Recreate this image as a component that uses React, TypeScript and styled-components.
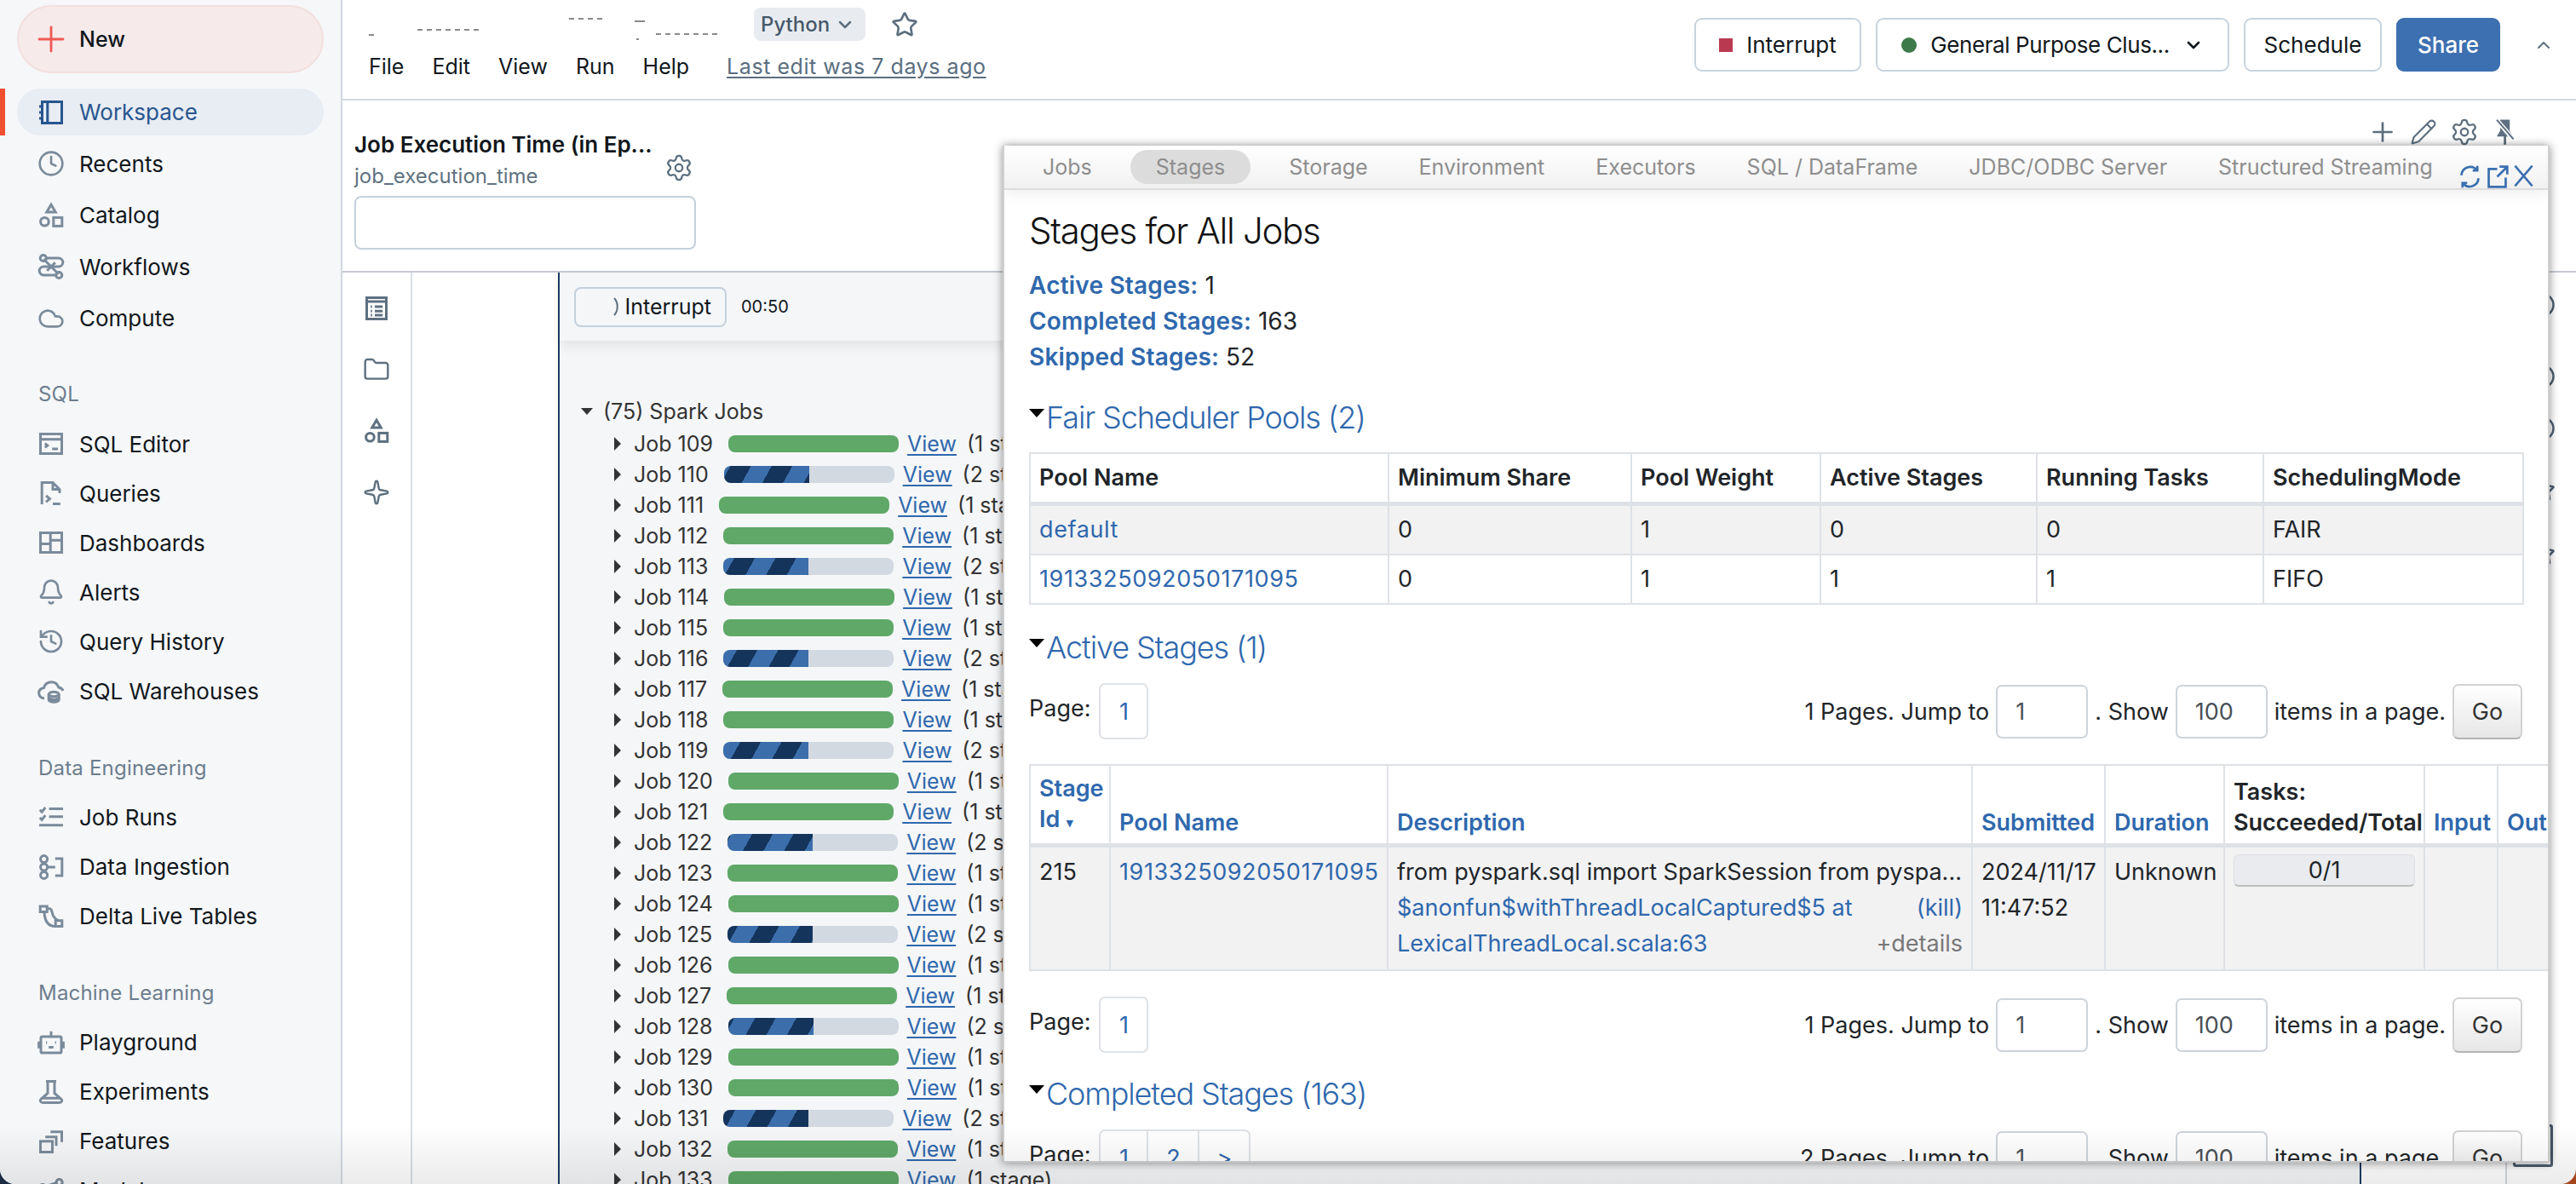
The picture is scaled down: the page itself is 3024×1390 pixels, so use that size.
import React from 'react';
import styled, { createGlobalStyle } from 'styled-components';
import {
  Bell,
  ChevronDown,
  ChevronUp,
  Circle,
  Clock,
  Cloud,
  Folder,
  History,
  Pencil,
  Plus,
  Settings,
  Sparkle,
  Star,
} from 'lucide-react';

const GlobalStyle = createGlobalStyle`
  html, body {
    margin: 0;
    padding: 0;
    background: #fff;
    font-family: 'Inter', 'Liberation Sans', sans-serif;
  }
  * { box-sizing: border-box; }
`;

const Desk = styled.div`
  width: 3024px;
  height: 1390px;
  background: linear-gradient(90deg, #1b2c44 50%, #a8451d 50%);
  overflow: hidden;
`;

const Frame = styled.div`
  position: relative;
  width: 100%;
  height: 100%;
  display: flex;
  background: #fff;
  border-radius: 0 0 18px 18px;
  overflow: hidden;
  color: #11171c;
`;

/* sidebar */
const Sidebar = styled.aside`
  width: 402px;
  flex: none;
  height: 100%;
  padding: 6px 20px 0;
  background: #f6f7f9;
  border-right: 2px solid #d1d9e1;
  position: relative;
`;

const NewButton = styled.div`
  height: 80px;
  margin-bottom: 18px;
  padding-left: 14px;
  display: flex;
  align-items: center;
  gap: 9px;
  border: 2px solid #f3dfdf;
  border-radius: 40px;
  background: #f6eaea;
  font-size: 25px;
  font-weight: 500;
`;

const NavGroup = styled.div<{ $gap: number }>`
  display: flex;
  flex-direction: column;
  gap: ${(p) => p.$gap}px;
`;

const NavItem = styled.div<{ $active?: boolean }>`
  height: 55px;
  flex: none;
  padding-left: 24px;
  display: flex;
  align-items: center;
  gap: 17px;
  border-radius: 28px;
  font-size: 26px;
  background: ${(p) => (p.$active ? '#e8ecf3' : 'transparent')};
  color: ${(p) => (p.$active ? '#27568f' : '#11171c')};
  svg {
    flex: none;
    color: ${(p) => (p.$active ? '#27568f' : '#7a8b9b')};
  }
`;

const ActiveMark = styled.div`
  position: absolute;
  left: 0;
  top: 104px;
  width: 6px;
  height: 55px;
  background: #f0502f;
`;

const SectionLabel = styled.div<{ $top: number }>`
  height: 30px;
  line-height: 30px;
  margin: ${(p) => p.$top}px 0 15.5px 25px;
  font-size: 24px;
  letter-spacing: 0.2px;
  color: #6c7d8e;
`;

/* shared svg for the product icons that no package has */
const Glyph = styled.svg<{ $size?: number }>`
  width: ${(p) => p.$size ?? 32}px;
  height: ${(p) => p.$size ?? 32}px;
  fill: none;
  stroke: currentColor;
  stroke-width: 1.5;
`;

const icons: Record<string, React.ReactNode> = {
  workspace: (
    <>
      <rect x="2.75" y="1.75" width="11.5" height="12.5" />
      <path d="M5.9 1.75v12.5M1 4.5h2.4M1 8h2.4M1 11.5h2.4" />
    </>
  ),
  catalog: (
    <>
      <path d="M8 1.6 10.6 6H5.4z" />
      <circle cx="4.2" cy="11.6" r="2.4" />
      <rect x="9.4" y="9.2" width="5" height="5" />
    </>
  ),
  workflows: (
    <>
      <circle cx="3.4" cy="3" r="1.8" />
      <circle cx="12.6" cy="13" r="1.8" />
      <path d="M5.2 3h7.2a2.5 2.5 0 0 1 0 5 H3.6a2.5 2.5 0 0 0 0 5h7.2" />
      <path d="M3.6 3.6 8 8l-2.4 2.4M12.4 12.4 8 8l2.4-2.4" />
    </>
  ),
  sqlEditor: (
    <>
      <rect x="1.75" y="2.25" width="12.5" height="11.5" />
      <path d="M1.75 5.4h12.5M4.4 7.8l1.5 1.2-1.5 1.2M8.6 11h3.4" />
    </>
  ),
  queries: (
    <>
      <path d="M2.6 14.5V1.75H9l4 4V8M9 1.75v4h4" />
      <path d="M5 9.4l2.2 1.9L5 13.2M9 14.2h4.4" />
    </>
  ),
  dashboards: (
    <>
      <rect x="1.75" y="2.25" width="12.5" height="11.5" />
      <path d="M7.6 2.25v11.5M1.75 8.8h5.85M7.6 6.6h6.65" />
    </>
  ),
  warehouse: (
    <>
      <path d="M4 12.4a3.1 3.1 0 0 1-.2-6.2 4.5 4.5 0 0 1 8.6-.2c1.2.2 2.2 1 2.6 2" />
      <ellipse cx="9.6" cy="10" rx="3" ry="1.4" />
      <path d="M6.6 10v3.2c0 .8 1.4 1.4 3 1.4s3-.6 3-1.4V10M6.6 11.8c0 .8 1.4 1.3 3 1.3s3-.5 3-1.3" />
    </>
  ),
  jobRuns: (
    <>
      <path d="M1.4 3.4l1.2 1.2 2-2.6M1.4 8l1.2 1.2 2-2.6M6.8 2.8H15M6.8 7.4H15M1 12.4h14" />
    </>
  ),
  ingestion: (
    <>
      <circle cx="3.8" cy="3.3" r="2" />
      <circle cx="3.8" cy="8" r="2" />
      <circle cx="3.8" cy="12.7" r="2" />
      <path d="M6 8h4.4M10.4 3H14.4V13H10.4" />
    </>
  ),
  delta: (
    <>
      <path d="M1.6 2h4v3.2h-4zM10.6 10.4h3.8v3.4h-3.8z" />
      <path d="M4 5.2c.2 6 2.4 8.6 6.6 8.6M8 3.4c1 4 1.6 6 4.4 7" />
      <path d="M5.6 3.4H8" />
    </>
  ),
  playground: (
    <>
      <rect x="2" y="4.5" width="12" height="9.5" rx="0.8" />
      <path d="M8 1.4v3M.8 7.4v4M15.2 7.4v4M6.6 10.8h2.8M5 8h.6M10.4 8h.6" />
    </>
  ),
  experiments: (
    <>
      <path d="M5 1.75h6M6 1.75v7L2.2 12c-1 1-.5 2.25 1 2.25h9.6c1.5 0 2-1.25 1-2.25L10 8.75v-7M3 11.6h10" />
    </>
  ),
  features: (
    <>
      <rect x="1.75" y="7.9" width="7" height="6.35" />
      <path d="M4.6 5.4H11v5.2M7.6 2.4h6.65v6" />
    </>
  ),
  models: (
    <>
      <circle cx="3" cy="6" r="1.8" />
      <circle cx="12.8" cy="3" r="1.8" />
      <circle cx="8" cy="10" r="1.8" />
      <path d="M4.6 5.4 11 3.4M4.2 7.2 6.7 9M9.2 8.8l2.8-4.4" />
    </>
  ),
  notebook: (
    <>
      <rect x="2.25" y="1.75" width="11.5" height="12.5" />
      <path d="M2.25 4h11.5M4.6 7h.8M7 7h4.6M4.6 9.6h.8M7 9.6h4.6M4.6 12h.8M7 12h4.6" />
    </>
  ),
  refresh: (
    <>
      <path d="M2.5 7a5.6 5.6 0 0 1 10-3.2M13.5 9a5.6 5.6 0 0 1-10 3.2M12.8 1v3h-3M3.2 15v-3h3" />
    </>
  ),
  popout: (
    <>
      <path d="M8 3H2.5v11.5h11V8.5M9.5 1.5h5v5M14.5 1.5 8 8" />
    </>
  ),
  close: (
    <>
      <path d="M2 1 14 15M14 1 2 15" />
    </>
  ),
};

const Icon = ({ name, size }: { name: string; size?: number }) => (
  <Glyph viewBox="0 0 16 16" $size={size}>
    {icons[name]}
  </Glyph>
);

const PinGlyph = styled.svg`
  width: 32px;
  height: 32px;
`;

const MutedPin = () => (
  <PinGlyph viewBox="0 0 16 16">
    <path d="M5 .8h5.6v6.4l2 3.4H3l2-3.4z" fill="#5d6f80" />
    <path d="M7.8 10v5.4" stroke="#5d6f80" strokeWidth="1.4" />
    <path d="M3.2 1.2 13 12.6" stroke="#fff" strokeWidth="2.6" />
    <path d="M3 .8 12.8 12.2" stroke="#5d6f80" strokeWidth="1" />
  </PinGlyph>
);

const topNav = [
  { label: 'Recents', icon: <Clock size={32} strokeWidth={2} /> },
  { label: 'Catalog', icon: <Icon name="catalog" /> },
  { label: 'Workflows', icon: <Icon name="workflows" /> },
  { label: 'Compute', icon: <Cloud size={32} strokeWidth={2} /> },
];

const sections = [
  {
    title: 'SQL',
    top: 47,
    items: [
      { label: 'SQL Editor', icon: <Icon name="sqlEditor" /> },
      { label: 'Queries', icon: <Icon name="queries" /> },
      { label: 'Dashboards', icon: <Icon name="dashboards" /> },
      { label: 'Alerts', icon: <Bell size={32} strokeWidth={2} /> },
      { label: 'Query History', icon: <History size={32} strokeWidth={2} /> },
      { label: 'SQL Warehouses', icon: <Icon name="warehouse" /> },
    ],
  },
  {
    title: 'Data Engineering',
    top: 48,
    items: [
      { label: 'Job Runs', icon: <Icon name="jobRuns" /> },
      { label: 'Data Ingestion', icon: <Icon name="ingestion" /> },
      { label: 'Delta Live Tables', icon: <Icon name="delta" /> },
    ],
  },
  {
    title: 'Machine Learning',
    top: 47.5,
    items: [
      { label: 'Playground', icon: <Icon name="playground" /> },
      { label: 'Experiments', icon: <Icon name="experiments" /> },
      { label: 'Features', icon: <Icon name="features" /> },
      { label: 'Models', icon: <Icon name="models" /> },
    ],
  },
];

/* notebook header */
const Main = styled.main`
  flex: 1;
  min-width: 0;
  display: flex;
  flex-direction: column;
`;

const TopBar = styled.header`
  height: 118px;
  flex: none;
  display: flex;
  justify-content: space-between;
  border-bottom: 2px solid #d3dae2;
`;

const TitleColumn = styled.div`
  padding: 9px 0 0 31px;
`;

const TitleRow = styled.div`
  height: 39px;
  display: flex;
  align-items: center;
  svg {
    color: #5d6f80;
  }
`;

const Scraps = styled.svg`
  width: 452px;
  height: 39px;
  flex: none;
`;

const LangChip = styled.div`
  width: 131px;
  height: 39px;
  margin-right: 30px;
  padding-left: 8px;
  display: flex;
  align-items: center;
  gap: 6px;
  border-radius: 8px;
  background: #e8ecf1;
  color: #46586a;
  font-size: 24px;
  font-weight: 500;
`;

const MenuRow = styled.nav`
  height: 30px;
  margin-top: 15px;
  display: flex;
  align-items: center;
  gap: 33px;
  font-size: 25px;
`;

const LastEdit = styled.a`
  margin-left: 11px;
  color: #5a6e80;
  letter-spacing: 0.55px;
  text-decoration: underline;
  text-underline-offset: 3px;
`;

const Actions = styled.div`
  padding: 21px 26px 0 0;
  display: flex;
  gap: 17px;
`;

const ActionButton = styled.button<{ $w: number; $primary?: boolean }>`
  width: ${(p) => p.$w}px;
  height: 63px;
  padding: 0;
  display: flex;
  align-items: center;
  justify-content: center;
  gap: 16px;
  border: 2px solid ${(p) => (p.$primary ? '#3d70b0' : '#c8d3de')};
  border-radius: 9px;
  background: ${(p) => (p.$primary ? '#3d70b0' : '#fff')};
  color: ${(p) => (p.$primary ? '#fff' : '#11171c')};
  font-family: inherit;
  font-size: 26px;
  font-weight: ${(p) => (p.$primary ? 500 : 400)};
`;

const ClusterName = styled.span`
  letter-spacing: -0.4px;
`;

const StopMark = styled.span`
  width: 16px;
  height: 16px;
  background: #b93a50;
`;

const RunDot = styled.span`
  width: 18px;
  height: 18px;
  border-radius: 50%;
  background: #3d7a4a;
`;

const Collapse = styled.div`
  margin-left: 22px;
  height: 63px;
  display: flex;
  align-items: center;
  color: #5d6f80;
`;

const WidgetBar = styled.section`
  height: 202px;
  flex: none;
  padding-left: 14px;
  display: flex;
  justify-content: space-between;
  border-bottom: 2px solid #c5cad1;
`;

const WidgetBlock = styled.div`
  width: 401px;
  padding-top: 34px;
`;

const WidgetHead = styled.div`
  display: flex;
  justify-content: space-between;
  align-items: flex-end;
  padding-right: 3px;
  white-space: nowrap;
  svg {
    margin-bottom: 11px;
    color: #5d6f80;
  }
`;

const WidgetTitle = styled.div`
  font-size: 26px;
  line-height: 36px;
  font-weight: 600;
`;

const WidgetName = styled.div`
  font-size: 24px;
  line-height: 37px;
  color: #5f7281;
`;

const WidgetInput = styled.div`
  height: 63px;
  margin-top: 5px;
  border: 2px solid #c5d0dc;
  border-radius: 8px;
`;

const WidgetTools = styled.div`
  padding: 20px 59px 0 0;
  display: flex;
  align-items: flex-start;
  color: #5d6f80;
`;

const ToolSlot = styled.div`
  width: 48px;
  height: 34px;
  display: flex;
  align-items: center;
  justify-content: center;
`;

const Body = styled.div`
  flex: 1;
  min-height: 0;
  display: flex;
`;

const LeftRail = styled.div`
  width: 82px;
  flex: none;
  padding-top: 26px;
  display: flex;
  flex-direction: column;
  align-items: center;
  gap: 40px;
  border-right: 2px solid #d8dde4;
  color: #5d7080;
`;

const Gutter = styled.div`
  width: 171px;
  flex: none;
`;

const Cell = styled.div`
  width: 2117px;
  flex: none;
  border-left: 2px solid #1b3a62;
  border-right: 2px solid #1b3a62;
  background: #f5f6f8;
`;

const RunBar = styled.div`
  height: 80px;
  padding-left: 17px;
  display: flex;
  align-items: center;
  background: #f4f6f8;
  box-shadow: 0 6px 14px rgba(0, 0, 0, 0.08);
`;

const InterruptButton = styled.div`
  width: 179px;
  height: 47px;
  padding-right: 16px;
  display: flex;
  align-items: center;
  justify-content: flex-end;
  gap: 5px;
  border: 2px solid #c5d0dc;
  border-radius: 8px;
  font-size: 25px;
  color: #11171c;
`;

const SpinnerArc = styled.svg`
  width: 10px;
  height: 24px;
  fill: none;
  stroke: #5d6f80;
  stroke-width: 2;
`;

const Elapsed = styled.span`
  margin-left: 17px;
  font-size: 20px;
`;

const JobList = styled.div`
  padding: 65px 0 0 25px;
  font-size: 25px;
  color: #333;
`;

const JobGroup = styled.div`
  height: 36px;
  margin-bottom: 2px;
  display: flex;
  align-items: center;
`;

const CaretDown = styled.span`
  width: 0;
  height: 0;
  margin-right: 12px;
  border-left: 7px solid transparent;
  border-right: 7px solid transparent;
  border-top: 8px solid #333;
`;

const JobRow = styled.div`
  height: 36px;
  padding-left: 39px;
  display: flex;
  align-items: center;
  white-space: nowrap;
`;

const CaretRight = styled.span`
  width: 0;
  height: 0;
  margin-right: 15px;
  border-top: 8px solid transparent;
  border-bottom: 8px solid transparent;
  border-left: 8px solid #333;
`;

const Bar = styled.div`
  width: 200px;
  height: 20px;
  margin: 0 10px 0 18px;
  border-radius: 8px;
  background: #d2d9e1;
  overflow: hidden;
`;

const BarDone = styled.div`
  height: 100%;
  background: #5fa868;
`;

const BarRunning = styled.div<{ $phase: number }>`
  width: 100px;
  height: 100%;
  background: repeating-linear-gradient(
    119deg,
    #14345c ${(p) => p.$phase * 0.875}px,
    #14345c ${(p) => p.$phase * 0.875 + 21.2}px,
    #3c6eab ${(p) => p.$phase * 0.875 + 21.2}px,
    #3c6eab ${(p) => p.$phase * 0.875 + 42.4}px
  );
`;

const JobLink = styled.a`
  margin-right: 12px;
  color: #2f68ad;
  text-decoration: underline;
  text-underline-offset: 3px;
`;

const RightGutter = styled.div`
  width: 171px;
  flex: none;
  border-right: 2px solid #d1d7de;
`;

const RightRail = styled.div`
  flex: 1;
  padding-left: 27px;
  display: flex;
  flex-direction: column;
  color: #4d5f70;
`;

const RailMark = styled.div<{ $top: number }>`
  height: 30px;
  margin-top: ${(p) => p.$top}px;
`;

/* spark ui popup */
const Popup = styled.div`
  position: absolute;
  left: 1177px;
  top: 171px;
  width: 1816px;
  height: 1194px;
  background: #fff;
  border: 2px solid #cfcfcf;
  border-top-width: 0;
  box-shadow: 0 0 10px rgba(0, 0, 0, 0.45);
  overflow: hidden;
  color: #212529;
`;

const PopupNav = styled.div`
  height: 52px;
  padding-left: 15px;
  display: flex;
  align-items: flex-start;
  background: linear-gradient(#ffffff, #f1f1f1);
  border-bottom: 2px solid #dcdcdc;
  box-shadow: 0 4px 16px rgba(0, 0, 0, 0.07);
`;

const PopupTab = styled.div<{ $active?: boolean }>`
  height: 40px;
  margin: 5px ${(p) => (p.$active ? 15 : 0)}px 0;
  padding: 0 30px;
  display: flex;
  align-items: center;
  border-radius: 20px;
  font-size: 25px;
  color: #8e8e8e;
  white-space: nowrap;
  background: ${(p) => (p.$active ? '#dcdcdc' : 'transparent')};
`;

const PopupTools = styled.div`
  position: absolute;
  right: 15px;
  top: 22px;
  display: flex;
  gap: 3px;
  color: #3a6fb0;
`;

const PopupBody = styled.div`
  padding: 23px 30px 0 29px;
`;

const PageTitle = styled.h3`
  margin: 0;
  font-size: 42px;
  line-height: 50px;
  font-weight: 300;
  letter-spacing: -1.3px;
  color: #111;
`;

const Stats = styled.ul`
  margin: 18px 0 0;
  padding: 0;
  list-style: none;
  font-size: 28px;
  line-height: 42px;
`;

const StatLabel = styled.strong`
  font-weight: 600;
  letter-spacing: 0.2px;
  color: #2f68ad;
`;

const Heading = styled.h4<{ $top: number }>`
  margin: ${(p) => p.$top}px 0 0;
  height: 44px;
  display: flex;
  align-items: center;
  font-size: 36px;
  line-height: 44px;
  font-weight: 300;
  letter-spacing: -1.1px;
  color: #2f68ad;
  &::before {
    content: '';
    width: 0;
    height: 0;
    margin: 0 2px 10px 0;
    border-left: 9.5px solid transparent;
    border-right: 9.5px solid transparent;
    border-top: 10px solid #000;
  }
`;

const Table = styled.table<{ $w: number; $top: number }>`
  width: ${(p) => p.$w}px;
  margin-top: ${(p) => p.$top}px;
  table-layout: fixed;
  border-collapse: collapse;
  font-size: 27px;
  line-height: 42px;
  th, td {
    padding: 8px 10px 9px;
    border: 2px solid #dee2e6;
    text-align: left;
    vertical-align: top;
    white-space: nowrap;
  }
  th {
    font-weight: 600;
    line-height: 36px;
    vertical-align: bottom;
    border-bottom-width: 5px;
    padding: 9px 10px 6px;
  }
  tbody tr:nth-child(odd) {
    background: #f2f2f3;
  }
`;

const Col = styled.col<{ $w: number }>`
  width: ${(p) => p.$w}px;
`;

const PoolHead = styled.th`
  && {
    padding: 6px 10px;
    line-height: 44px;
  }
`;

const PoolCell = styled.td`
  && {
    padding: 6px 10px;
    line-height: 44px;
  }
`;

const BlueHead = styled.span`
  color: #2f68ad;
`;

const SortMark = styled.span`
  margin-left: 8px;
  font-size: 15px;
  color: #2f68ad;
`;

const TextLink = styled.a`
  color: #2f68ad;
`;

const PoolLink = styled(TextLink)`
  letter-spacing: 0.6px;
`;

const DescLine = styled.div`
  display: flex;
  justify-content: space-between;
`;

const Details = styled.span`
  color: #777;
`;

const ProgressBox = styled.div`
  height: 38px;
  border: 1px solid #dcdee2;
  border-bottom: 2px solid #bdbdbd;
  border-radius: 6px;
  background: #e9ebee;
  text-align: center;
  line-height: 36px;
`;

const PageRow = styled.div<{ $top: number }>`
  height: 66px;
  margin-top: ${(p) => p.$top}px;
  display: flex;
  justify-content: space-between;
  align-items: center;
  font-size: 27px;
`;

const PageLeft = styled.div`
  display: flex;
  align-items: center;
  gap: 10px;
`;

const PageLabel = styled.span`
  margin-bottom: 8px;
`;

const PageLinks = styled.div`
  height: 66px;
  display: flex;
  border: 2px solid #dee2e6;
  border-radius: 7px;
`;

const PageLink = styled.a<{ $w: number }>`
  width: ${(p) => p.$w}px;
  display: flex;
  align-items: center;
  justify-content: center;
  color: #2f68ad;
  & + & {
    border-left: 2px solid #dee2e6;
  }
`;

const PageRight = styled.div`
  display: flex;
  align-items: center;
  gap: 8px;
`;

const NumberBox = styled.div`
  width: 108px;
  height: 63px;
  padding-left: 21px;
  display: flex;
  align-items: center;
  border: 2px solid #ced4da;
  border-radius: 7px;
  color: #495057;
`;

const GoButton = styled.button`
  width: 82px;
  height: 65px;
  border: 2px solid #d2d2d2;
  border-bottom-color: #b4b4b4;
  border-radius: 7px;
  background: linear-gradient(#ffffff, #e6e6e6);
  font-family: inherit;
  font-size: 27px;
  color: #333;
`;

const HiddenBracket = styled.div`
  position: absolute;
  left: 2950px;
  top: 1320px;
  width: 47px;
  height: 50px;
  border: 3px solid #4f5f70;
  border-radius: 3px;
`;

const BottomFade = styled.div`
  position: absolute;
  left: 0;
  right: 0;
  bottom: 0;
  height: 70px;
  background: linear-gradient(rgba(0, 0, 0, 0), rgba(0, 0, 0, 0.08));
  pointer-events: none;
`;

const jobs = Array.from({ length: 25 }, (_, i) => 109 + i);

const jobPhases: Record<number, number> = {
  110: 7.5,
  113: 13,
  116: 16,
  119: 20,
  122: 29,
  125: -12,
  128: -17,
  131: -10,
};

const popupTabs = [
  'Jobs',
  'Stages',
  'Storage',
  'Environment',
  'Executors',
  'SQL / DataFrame',
  'JDBC/ODBC Server',
  'Structured Streaming',
];

const pools = [
  ['default', '0', '1', '0', '0', 'FAIR'],
  ['1913325092050171095', '0', '1', '1', '1', 'FIFO'],
];

const Pager = ({ top, pages, total }: { top: number; pages: string[]; total: number }) => (
  <PageRow $top={top}>
    <PageLeft>
      <PageLabel>Page:</PageLabel>
      <PageLinks>
        {pages.map((p, i) => (
          <PageLink key={p} $w={i === 0 ? 54 : 60}>
            {p}
          </PageLink>
        ))}
      </PageLinks>
    </PageLeft>
    <PageRight>
      <span>{total} Pages. Jump to</span>
      <NumberBox>1</NumberBox>
      <span>. Show</span>
      <NumberBox>100</NumberBox>
      <span>items in a page.</span>
      <GoButton>Go</GoButton>
    </PageRight>
  </PageRow>
);

const App: React.FC = () => {
  return (
    <Desk>
      <GlobalStyle />
      <Frame>
        <Sidebar>
          <ActiveMark />
          <NewButton>
            <Plus size={48} color="#ef5a55" strokeWidth={1.4} />
            New
          </NewButton>
          <NavGroup $gap={5.5}>
            <NavItem $active>
              <Icon name="workspace" />
              Workspace
            </NavItem>
            {topNav.map((n) => (
              <NavItem key={n.label}>
                {n.icon}
                {n.label}
              </NavItem>
            ))}
          </NavGroup>
          {sections.map((s) => (
            <div key={s.title}>
              <SectionLabel $top={s.top}>{s.title}</SectionLabel>
              <NavGroup $gap={3}>
                {s.items.map((n) => (
                  <NavItem key={n.label}>
                    {n.icon}
                    {n.label}
                  </NavItem>
                ))}
              </NavGroup>
            </div>
          ))}
        </Sidebar>

        <Main>
          <TopBar>
            <TitleColumn>
              <TitleRow>
                <Scraps viewBox="0 0 452 39" stroke="#8a8a8a" strokeWidth="2">
                  <path d="M0 32h8M57 26h72M235 13h44M337 31h76" strokeDasharray="6 5" />
                  <path d="M312 16h12M314 37h3" />
                </Scraps>
                <LangChip>
                  Python
                  <ChevronDown size={24} strokeWidth={2.5} />
                </LangChip>
                <Star size={32} strokeWidth={2} />
              </TitleRow>
              <MenuRow>
                <span>File</span>
                <span>Edit</span>
                <span>View</span>
                <span>Run</span>
                <span>Help</span>
                <LastEdit>Last edit was 7 days ago</LastEdit>
              </MenuRow>
            </TitleColumn>
            <Actions>
              <ActionButton $w={196}>
                <StopMark />
                Interrupt
              </ActionButton>
              <ActionButton $w={415}>
                <RunDot />
                <ClusterName>General Purpose Clus...</ClusterName>
                <ChevronDown size={24} strokeWidth={2.6} />
              </ActionButton>
              <ActionButton $w={162}>Schedule</ActionButton>
              <ActionButton $w={122} $primary>
                Share
              </ActionButton>
              <Collapse>
                <ChevronUp size={24} />
              </Collapse>
            </Actions>
          </TopBar>

          <WidgetBar>
            <WidgetBlock>
              <WidgetHead>
                <div>
                  <WidgetTitle>Job Execution Time (in Ep...</WidgetTitle>
                  <WidgetName>job_execution_time</WidgetName>
                </div>
                <Settings size={34} strokeWidth={1.6} />
              </WidgetHead>
              <WidgetInput />
            </WidgetBlock>
            <WidgetTools>
              <ToolSlot>
                <Plus size={36} strokeWidth={1.8} />
              </ToolSlot>
              <ToolSlot>
                <Pencil size={32} strokeWidth={1.6} />
              </ToolSlot>
              <ToolSlot>
                <Settings size={34} strokeWidth={1.6} />
              </ToolSlot>
              <ToolSlot>
                <MutedPin />
              </ToolSlot>
            </WidgetTools>
          </WidgetBar>

          <Body>
            <LeftRail>
              <Icon name="notebook" />
              <Folder size={32} strokeWidth={1.8} />
              <Icon name="catalog" />
              <Sparkle size={32} strokeWidth={1.8} />
            </LeftRail>
            <Gutter />
            <Cell>
              <RunBar>
                <InterruptButton>
                  <SpinnerArc viewBox="0 0 10 24">
                    <path d="M2 2c5 5 5 15 0 20" />
                  </SpinnerArc>
                  Interrupt
                </InterruptButton>
                <Elapsed>00:50</Elapsed>
              </RunBar>
              <JobList>
                <JobGroup>
                  <CaretDown />
                  (75) Spark Jobs
                </JobGroup>
                {jobs.map((id) => {
                  const phase = jobPhases[id];
                  return (
                    <JobRow key={id}>
                      <CaretRight />
                      Job {id}
                      <Bar>{phase === undefined ? <BarDone /> : <BarRunning $phase={phase} />}</Bar>
                      <JobLink>View</JobLink>
                      ({phase === undefined ? '1 stage' : '2 stages'})
                    </JobRow>
                  );
                })}
              </JobList>
            </Cell>
            <RightGutter />
            <RightRail>
              <RailMark $top={23}>
                <Circle size={30} strokeWidth={2} />
              </RailMark>
              <RailMark $top={54}>
                <Circle size={30} strokeWidth={2} />
              </RailMark>
              <RailMark $top={31}>
                <Circle size={30} strokeWidth={2} />
              </RailMark>
              <RailMark $top={42}>
                <Star size={30} strokeWidth={2} />
              </RailMark>
              <RailMark $top={45}>
                <Star size={30} strokeWidth={2} />
              </RailMark>
            </RightRail>
          </Body>
        </Main>

        <HiddenBracket />

        <Popup>
          <PopupNav>
            {popupTabs.map((t) => (
              <PopupTab key={t} $active={t === 'Stages'}>
                {t}
              </PopupTab>
            ))}
          </PopupNav>
          <PopupTools>
            <Icon name="refresh" size={29} />
            <Icon name="popout" size={29} />
            <Icon name="close" size={27} />
          </PopupTools>
          <PopupBody>
            <PageTitle>Stages for All Jobs</PageTitle>
            <Stats>
              <li>
                <StatLabel>Active Stages:</StatLabel> 1
              </li>
              <li>
                <StatLabel>Completed Stages:</StatLabel> 163
              </li>
              <li>
                <StatLabel>Skipped Stages:</StatLabel> 52
              </li>
            </Stats>

            <Heading $top={28}>Fair Scheduler Pools (2)</Heading>
            <Table $w={1753} $top={19}>
              <colgroup>
                <Col $w={421} />
                <Col $w={285} />
                <Col $w={222} />
                <Col $w={254} />
                <Col $w={266} />
                <Col $w={305} />
              </colgroup>
              <thead>
                <tr>
                  <PoolHead>Pool Name</PoolHead>
                  <PoolHead>Minimum Share</PoolHead>
                  <PoolHead>Pool Weight</PoolHead>
                  <PoolHead>Active Stages</PoolHead>
                  <PoolHead>Running Tasks</PoolHead>
                  <PoolHead>SchedulingMode</PoolHead>
                </tr>
              </thead>
              <tbody>
                {pools.map((row) => (
                  <tr key={row[0]}>
                    <PoolCell>
                      <PoolLink>{row[0]}</PoolLink>
                    </PoolCell>
                    {row.slice(1).map((v, i) => (
                      <PoolCell key={i}>{v}</PoolCell>
                    ))}
                  </tr>
                ))}
              </tbody>
            </Table>

            <Heading $top={28}>Active Stages (1)</Heading>
            <Pager top={20} pages={['1']} total={1} />

            <Table $w={1900} $top={29}>
              <colgroup>
                <Col $w={94} />
                <Col $w={326} />
                <Col $w={686} />
                <Col $w={156} />
                <Col $w={140} />
                <Col $w={235} />
                <Col $w={86} />
                <Col $w={177} />
              </colgroup>
              <thead>
                <tr>
                  <th>
                    <BlueHead>
                      Stage
                      <br />
                      Id
                    </BlueHead>
                    <SortMark>▾</SortMark>
                  </th>
                  <th>
                    <BlueHead>Pool Name</BlueHead>
                  </th>
                  <th>
                    <BlueHead>Description</BlueHead>
                  </th>
                  <th>
                    <BlueHead>Submitted</BlueHead>
                  </th>
                  <th>
                    <BlueHead>Duration</BlueHead>
                  </th>
                  <th>
                    Tasks:
                    <br />
                    Succeeded/Total
                  </th>
                  <th>
                    <BlueHead>Input</BlueHead>
                  </th>
                  <th>
                    <BlueHead>Output</BlueHead>
                  </th>
                </tr>
              </thead>
              <tbody>
                <tr>
                  <td>215</td>
                  <td>
                    <PoolLink>1913325092050171095</PoolLink>
                  </td>
                  <td>
                    <DescLine>from pyspark.sql import SparkSession from pyspa...</DescLine>
                    <DescLine>
                      <TextLink>$anonfun$withThreadLocalCaptured$5 at</TextLink>
                      <TextLink>(kill)</TextLink>
                    </DescLine>
                    <DescLine>
                      <TextLink>LexicalThreadLocal.scala:63</TextLink>
                      <Details>+details</Details>
                    </DescLine>
                  </td>
                  <td>
                    2024/11/17
                    <br />
                    11:47:52
                  </td>
                  <td>Unknown</td>
                  <td>
                    <ProgressBox>0/1</ProgressBox>
                  </td>
                  <td />
                  <td />
                </tr>
              </tbody>
            </Table>

            <Pager top={30} pages={['1']} total={1} />
            <Heading $top={26}>Completed Stages (163)</Heading>
            <Pager top={20} pages={['1', '2', '>']} total={2} />
          </PopupBody>
        </Popup>

        <BottomFade />
      </Frame>
    </Desk>
  );
};

export default App;
